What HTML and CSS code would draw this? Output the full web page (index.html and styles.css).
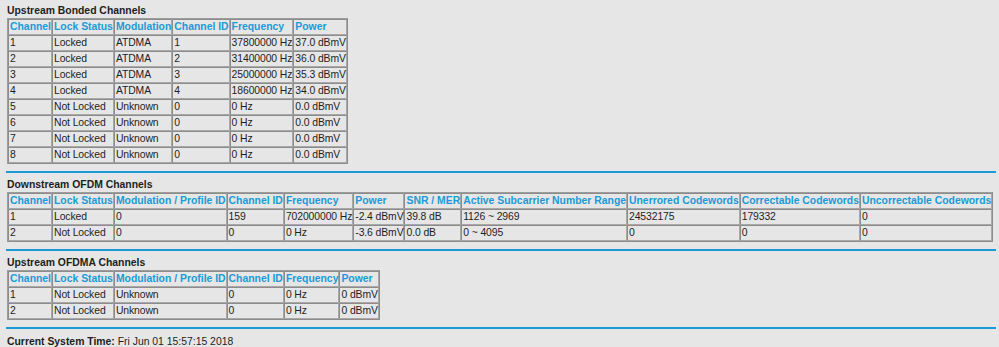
FILE: index.html
```html
<!DOCTYPE html>
<html>
<head>
<meta charset="utf-8">
<link rel="stylesheet" href="styles.css">
</head>
<body>
<div class="page">
  <h2 class="title">Upstream Bonded Channels</h2>
  <table class="grid">
    <tr><th>Channel</th><th>Lock Status</th><th>Modulation</th><th>Channel ID</th><th>Frequency</th><th>Power</th></tr>
    <tr><td>1</td><td>Locked</td><td>ATDMA</td><td>1</td><td>37800000 Hz</td><td>37.0 dBmV</td></tr>
    <tr><td>2</td><td>Locked</td><td>ATDMA</td><td>2</td><td>31400000 Hz</td><td>36.0 dBmV</td></tr>
    <tr><td>3</td><td>Locked</td><td>ATDMA</td><td>3</td><td>25000000 Hz</td><td>35.3 dBmV</td></tr>
    <tr><td>4</td><td>Locked</td><td>ATDMA</td><td>4</td><td>18600000 Hz</td><td>34.0 dBmV</td></tr>
    <tr><td>5</td><td>Not Locked</td><td>Unknown</td><td>0</td><td>0 Hz</td><td>0.0 dBmV</td></tr>
    <tr><td>6</td><td>Not Locked</td><td>Unknown</td><td>0</td><td>0 Hz</td><td>0.0 dBmV</td></tr>
    <tr><td>7</td><td>Not Locked</td><td>Unknown</td><td>0</td><td>0 Hz</td><td>0.0 dBmV</td></tr>
    <tr><td>8</td><td>Not Locked</td><td>Unknown</td><td>0</td><td>0 Hz</td><td>0.0 dBmV</td></tr>
  </table>
  <div class="sep"></div>

  <h2 class="title">Downstream OFDM Channels</h2>
  <table class="grid">
    <tr><th>Channel</th><th>Lock Status</th><th>Modulation / Profile ID</th><th>Channel ID</th><th>Frequency</th><th>Power</th><th>SNR / MER</th><th>Active Subcarrier Number Range</th><th>Unerrored Codewords</th><th>Correctable Codewords</th><th>Uncorrectable Codewords</th></tr>
    <tr><td>1</td><td>Locked</td><td>0</td><td>159</td><td>702000000 Hz</td><td>-2.4 dBmV</td><td>39.8 dB</td><td>1126 ~ 2969</td><td>24532175</td><td>179332</td><td>0</td></tr>
    <tr><td>2</td><td>Not Locked</td><td>0</td><td>0</td><td>0 Hz</td><td>-3.6 dBmV</td><td>0.0 dB</td><td>0 ~ 4095</td><td>0</td><td>0</td><td>0</td></tr>
  </table>
  <div class="sep"></div>

  <h2 class="title">Upstream OFDMA Channels</h2>
  <table class="grid">
    <tr><th>Channel</th><th>Lock Status</th><th>Modulation / Profile ID</th><th>Channel ID</th><th>Frequency</th><th>Power</th></tr>
    <tr><td>1</td><td>Not Locked</td><td>Unknown</td><td>0</td><td>0 Hz</td><td>0 dBmV</td></tr>
    <tr><td>2</td><td>Not Locked</td><td>Unknown</td><td>0</td><td>0 Hz</td><td>0 dBmV</td></tr>
  </table>
  <div class="sep"></div>

  <p class="time"><span class="label">Current System Time:</span> Fri Jun 01 15:57:15 2018</p>
</div>
</body>
</html>
```

FILE: styles.css
```css
html, body {
  margin: 0;
  padding: 0;
  background: #e6e6e6;
}

body {
  font-family: "Liberation Sans", Arial, Helvetica, sans-serif;
  font-size: 10.4px;
  line-height: 12px;
  color: #1e1e1e;
}

.page {
  padding: 4px 3px 0 7px;
}

.title {
  margin: 0 0 1px;
  font-size: 10.4px;
  font-weight: bold;
  line-height: 13px;
  color: #1e1e1e;
}

.grid {
  border-collapse: separate;
  border-spacing: 0;
  border: 1px solid #8c8c8c;
  border-top-color: #9c9c9c;
  border-left-color: #9c9c9c;
}

.grid th,
.grid td {
  border: 1px solid #8c8c8c;
  border-bottom-color: #a8a8a8;
  border-right-color: #a8a8a8;
  padding: 1px 0 1px 1px;
  text-align: left;
  white-space: nowrap;
  font-size: 10.4px;
  line-height: 12px;
  vertical-align: middle;
}

.grid td {
  letter-spacing: -0.1px;
}

.grid th {
  color: #1b9ad6;
  font-weight: bold;
}

.sep {
  height: 2px;
  background: #1b9ad6;
  margin: 7px 0 5px -1px;
}

.time {
  margin: 0;
  padding-top: 1px;
  line-height: 13px;
}

.label {
  font-weight: bold;
}
```
